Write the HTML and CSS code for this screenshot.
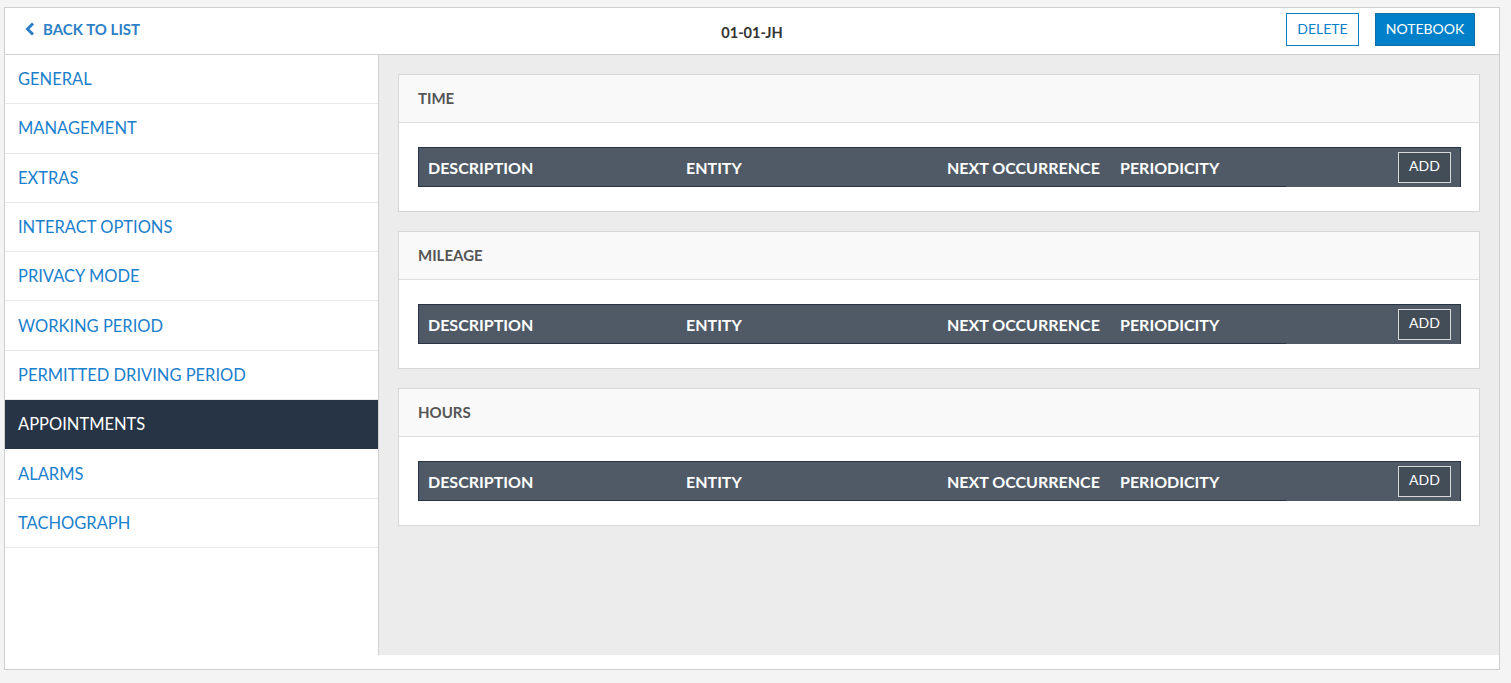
FILE: index.html
```html
<!DOCTYPE html>
<html lang="en">
<head>
    <meta charset="UTF-8">
    <meta name="viewport" content="width=device-width, initial-scale=1.0">
    <title>01-01-JH</title>
    <link rel="stylesheet" href="styles.css">
</head>
<body>
    <div class="container">
        <div class="topbar">
            <a class="back-link" href="#">
                <svg class="back-icon" width="10" height="14" viewBox="0 0 10 14">
                    <path d="M8 1.5 L2.5 7 L8 12.5" fill="none" stroke="#2d7fc6" stroke-width="3"/>
                </svg>
                BACK TO LIST
            </a>
            <div class="title">01-01-JH</div>
            <div class="actions">
                <button class="btn btn-outline">DELETE</button>
                <button class="btn btn-primary">NOTEBOOK</button>
            </div>
        </div>

        <div class="main">
            <ul class="sidebar">
                <li class="nav-item">GENERAL</li>
                <li class="nav-item">MANAGEMENT</li>
                <li class="nav-item">EXTRAS</li>
                <li class="nav-item">INTERACT OPTIONS</li>
                <li class="nav-item">PRIVACY MODE</li>
                <li class="nav-item">WORKING PERIOD</li>
                <li class="nav-item">PERMITTED DRIVING PERIOD</li>
                <li class="nav-item active">APPOINTMENTS</li>
                <li class="nav-item">ALARMS</li>
                <li class="nav-item">TACHOGRAPH</li>
            </ul>

            <div class="content">
                <div class="panel">
                    <div class="panel-header">TIME</div>
                    <div class="panel-body">
                        <div class="table-head">
                            <div class="th">DESCRIPTION</div>
                            <div class="th">ENTITY</div>
                            <div class="th">NEXT OCCURRENCE</div>
                            <div class="th">PERIODICITY</div>
                            <div class="th th-action"><button class="add-btn">ADD</button></div>
                        </div>
                    </div>
                </div>

                <div class="panel">
                    <div class="panel-header">MILEAGE</div>
                    <div class="panel-body">
                        <div class="table-head">
                            <div class="th">DESCRIPTION</div>
                            <div class="th">ENTITY</div>
                            <div class="th">NEXT OCCURRENCE</div>
                            <div class="th">PERIODICITY</div>
                            <div class="th th-action"><button class="add-btn">ADD</button></div>
                        </div>
                    </div>
                </div>

                <div class="panel">
                    <div class="panel-header">HOURS</div>
                    <div class="panel-body">
                        <div class="table-head">
                            <div class="th">DESCRIPTION</div>
                            <div class="th">ENTITY</div>
                            <div class="th">NEXT OCCURRENCE</div>
                            <div class="th">PERIODICITY</div>
                            <div class="th th-action"><button class="add-btn">ADD</button></div>
                        </div>
                    </div>
                </div>
            </div>
        </div>
    </div>
</body>
</html>
```

FILE: styles.css
```css
* {
    box-sizing: border-box;
}
body {
    margin: 0;
    padding: 7px 11px 13px 4px;
    background-color: #f4f4f4;
    font-family: Lato, "Open Sans", sans-serif;
}
.container {
    background: white;
    border: 1px solid #cfcfcf;
    padding-bottom: 14px;
}
.topbar {
    height: 47px;
    display: flex;
    align-items: center;
    padding: 0 24px 0 20px;
    border-bottom: 1px solid #cfcfcf;
    position: relative;
}
.back-link {
    display: flex;
    align-items: center;
    gap: 8px;
    color: #2d7fc6;
    font-size: 15px;
    font-weight: 700;
    text-decoration: none;
    margin-top: -5px;
}
.back-icon {
    display: block;
}
.title {
    position: absolute;
    left: 0;
    right: 0;
    text-align: center;
    font-size: 14.6px;
    font-weight: 700;
    color: #333;
    pointer-events: none;
    margin-top: 2px;
}
.actions {
    margin-left: auto;
    display: flex;
    gap: 16px;
    margin-top: -4px;
}
.btn {
    font-family: Lato, "Open Sans", sans-serif;
    font-size: 14px;
    height: 33px;
    border-radius: 0;
    padding-bottom: 3px;
    cursor: pointer;
}
.btn-outline {
    width: 73px;
    background: white;
    color: #0a80c9;
    border: 1px solid #0a80c9;
}
.btn-primary {
    width: 100px;
    background: #0080c9;
    color: white;
    border: 1px solid #0d6ea8;
}
.main {
    display: flex;
    height: 600px;
}
.sidebar {
    list-style: none;
    margin: 0;
    padding: 0;
    width: 374px;
    border-right: 1px solid #cfcfcf;
    flex-shrink: 0;
}
.nav-item {
    height: 49.3px;
    display: flex;
    align-items: center;
    padding: 0 13px;
    border-bottom: 1px solid #e8e8e8;
    color: #1a80cc;
    font-size: 16.5px;
    cursor: pointer;
}
.nav-item.active {
    background: #263445;
    color: white;
    border-bottom-color: #263445;
}
.content {
    flex: 1;
    background: #ececec;
    padding: 19px 19px;
    display: flex;
    flex-direction: column;
    gap: 19px;
}
.panel {
    background: white;
    border: 1px solid #d6d6d6;
}
.panel-header {
    height: 48px;
    display: flex;
    align-items: center;
    padding: 0 19px 2px;
    background: #f9f9f9;
    border-bottom: 1px solid #dedede;
    color: #555;
    font-size: 15px;
    font-weight: 700;
}
.panel-body {
    padding: 24px 18px 24px 19px;
}
.table-head {
    display: grid;
    grid-template-columns: 258px 261px 173px 175px 1fr;
    height: 40px;
    background: #4f5a66;
    border: 1px solid #273445;
}
.th {
    display: flex;
    align-items: center;
    padding: 0 9px;
    color: white;
    font-size: 16px;
    font-weight: 700;
    white-space: nowrap;
}
.th-action {
    justify-content: flex-end;
    padding-right: 9px;
    margin-bottom: -1px;
    background: #4f5a66;
}
.add-btn {
    width: 53px;
    height: 31px;
    background: #434d58;
    border: 1px solid #d8d8d8;
    color: white;
    font-family: Lato, "Open Sans", sans-serif;
    font-size: 14px;
    padding: 0 0 4px;
    cursor: pointer;
}
```
